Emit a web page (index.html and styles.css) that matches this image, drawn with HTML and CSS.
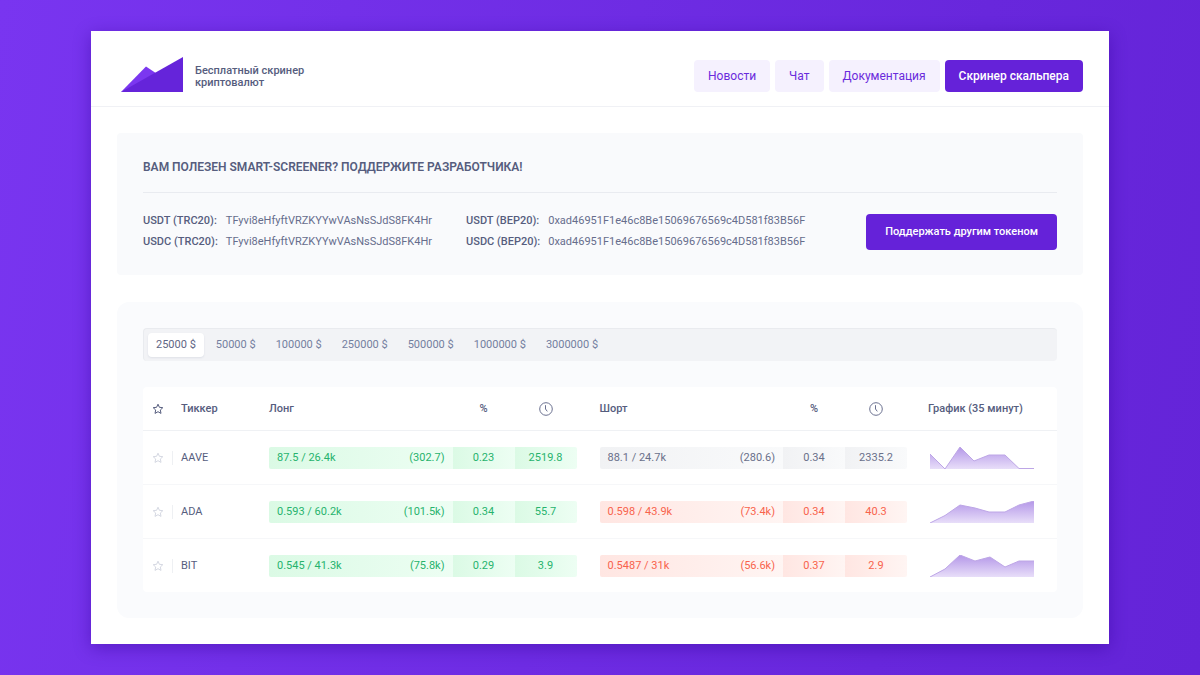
FILE: index.html
```html
<!DOCTYPE html>
<html lang="ru">
<head>
<meta charset="utf-8">
<meta name="viewport" content="width=device-width, initial-scale=1">
<title>Smart-Screener</title>
<link rel="stylesheet" href="styles.css">
</head>
<body>
<svg class="defs" aria-hidden="true">
  <defs>
    <linearGradient id="area" x1="0" y1="0" x2="0" y2="1">
      <stop offset="0" stop-color="#b497e8"/>
      <stop offset="1" stop-color="#e8def9"/>
    </linearGradient>
    <symbol id="star" viewBox="0 0 12 12">
      <path d="M6 1.2 7.4 4.3 10.8 4.7 8.3 7 9 10.4 6 8.7 3 10.4 3.7 7 1.2 4.7 4.6 4.3Z" fill="none" stroke="currentColor" stroke-linejoin="round"/>
    </symbol>
    <symbol id="clock" viewBox="0 0 14 14">
      <circle cx="7" cy="7" r="6.3" fill="none" stroke="currentColor"/>
      <path d="M6.5 3.2V7L8.3 9.4" fill="none" stroke="currentColor"/>
    </symbol>
  </defs>
</svg>
<div class="window">
  <header class="header">
    <a class="brand" href="#">
      <svg class="logo" viewBox="0 0 62 35" aria-hidden="true">
        <path d="M0 35 25 9.5 34 15.5 36 17 20 30Z" fill="#7b37f0"/>
        <path d="M0 35 62 0V35Z" fill="#6524da"/>
      </svg>
      <span class="tagline">Бесплатный скринер криптовалют</span>
    </a>
    <nav class="nav">
      <a class="nav-link" href="#">Новости</a>
      <a class="nav-link" href="#">Чат</a>
      <a class="nav-link" href="#">Документация</a>
      <a class="nav-link nav-link-primary" href="#">Скринер скальпера</a>
    </nav>
  </header>
  <main class="main">
    <section class="donate">
      <h1 class="donate-title">Вам полезен Smart-Screener? Поддержите разработчика!</h1>
      <div class="donate-body">
        <dl class="wallets wallets-first">
          <dt>USDT (TRC20):</dt><dd>TFyvi8eHfyftVRZKYYwVAsNsSJdS8FK4Hr</dd>
          <dt>USDC (TRC20):</dt><dd>TFyvi8eHfyftVRZKYYwVAsNsSJdS8FK4Hr</dd>
        </dl>
        <dl class="wallets">
          <dt>USDT (BEP20):</dt><dd>0xad46951F1e46c8Be15069676569c4D581f83B56F</dd>
          <dt>USDC (BEP20):</dt><dd>0xad46951F1e46c8Be15069676569c4D581f83B56F</dd>
        </dl>
        <button class="donate-button" type="button">Поддержать другим токеном</button>
      </div>
    </section>
    <section class="screener">
      <div class="tabs">
        <button class="tab tab-active" type="button">25000 $</button>
        <button class="tab" type="button">50000 $</button>
        <button class="tab" type="button">100000 $</button>
        <button class="tab" type="button">250000 $</button>
        <button class="tab" type="button">500000 $</button>
        <button class="tab" type="button">1000000 $</button>
        <button class="tab" type="button">3000000 $</button>
      </div>
      <table class="table">
        <colgroup>
          <col class="col-star"><col class="col-ticker">
          <col><col class="col-value"><col class="col-value">
          <col class="col-gap">
          <col><col class="col-value"><col class="col-value">
          <col class="col-chart">
        </colgroup>
        <thead>
          <tr>
            <th class="star"><svg class="icon-star" role="img" aria-label="Избранное"><use href="#star"/></svg></th>
            <th class="ticker">Тиккер</th>
            <th>Лонг</th>
            <th class="center">%</th>
            <th class="center"><svg class="icon-clock" role="img" aria-label="Время"><use href="#clock"/></svg></th>
            <th></th>
            <th>Шорт</th>
            <th class="center">%</th>
            <th class="center"><svg class="icon-clock" role="img" aria-label="Время"><use href="#clock"/></svg></th>
            <th class="chart-head">График (35 минут)</th>
          </tr>
        </thead>
        <tbody>
          <tr>
            <td class="star"><button class="star-button" type="button" aria-label="Добавить AAVE в избранное"><svg class="icon-star"><use href="#star"/></svg></button></td>
            <td class="ticker">AAVE</td>
            <td><div class="bar green first"><span>87.5 / 26.4k</span><span>(302.7)</span></div></td>
            <td><div class="bar green value">0.23</div></td>
            <td><div class="bar green value last">2519.8</div></td>
            <td></td>
            <td><div class="bar gray first"><span>88.1 / 24.7k</span><span>(280.6)</span></div></td>
            <td><div class="bar gray value">0.34</div></td>
            <td><div class="bar gray value last">2335.2</div></td>
            <td class="chart"><svg class="area" viewBox="0 0 104 22" aria-hidden="true"><path d="M0 22V7L15 22 30 0 44 14 59 8H75L89 21.5H104V22Z" fill="url(#area)"/><path d="M0 7 15 22 30 0 44 14 59 8H75L89 21.5H104" class="area-line"/></svg></td>
          </tr>
          <tr>
            <td class="star"><button class="star-button" type="button" aria-label="Добавить ADA в избранное"><svg class="icon-star"><use href="#star"/></svg></button></td>
            <td class="ticker">ADA</td>
            <td><div class="bar green first"><span>0.593 / 60.2k</span><span>(101.5k)</span></div></td>
            <td><div class="bar green value">0.34</div></td>
            <td><div class="bar green value last">55.7</div></td>
            <td></td>
            <td><div class="bar red first"><span>0.598 / 43.9k</span><span>(73.4k)</span></div></td>
            <td><div class="bar red value">0.34</div></td>
            <td><div class="bar red value last">40.3</div></td>
            <td class="chart"><svg class="area" viewBox="0 0 104 22" aria-hidden="true"><path d="M0 22 15 14.5 30 4 45 7 59 11H75L89 4 104 0V22Z" fill="url(#area)"/><path d="M0 22 15 14.5 30 4 45 7 59 11H75L89 4 104 0" class="area-line"/></svg></td>
          </tr>
          <tr>
            <td class="star"><button class="star-button" type="button" aria-label="Добавить BIT в избранное"><svg class="icon-star"><use href="#star"/></svg></button></td>
            <td class="ticker">BIT</td>
            <td><div class="bar green first"><span>0.545 / 41.3k</span><span>(75.8k)</span></div></td>
            <td><div class="bar green value">0.29</div></td>
            <td><div class="bar green value last">3.9</div></td>
            <td></td>
            <td><div class="bar red first"><span>0.5487 / 31k</span><span>(56.6k)</span></div></td>
            <td><div class="bar red value">0.37</div></td>
            <td><div class="bar red value last">2.9</div></td>
            <td class="chart"><svg class="area" viewBox="0 0 104 22" aria-hidden="true"><path d="M0 22 15 14 30 0 45 6 60 2 75 12 89 6H104V22Z" fill="url(#area)"/><path d="M0 22 15 14 30 0 45 6 60 2 75 12 89 6H104" class="area-line"/></svg></td>
          </tr>
        </tbody>
      </table>
    </section>
  </main>
</div>
</body>
</html>
```
FILE: styles.css
```css
* {
  box-sizing: border-box;
}

body {
  margin: 0;
  min-height: 100vh;
  padding: 31px 91px;
  background: linear-gradient(100deg, #7935f0 0%, #6827dc 75%, #6424d8 100%);
  color: #565d7e;
  font-family: Roboto, "Liberation Sans", sans-serif;
  font-size: 11px;
  line-height: 16px;
}

button {
  font: inherit;
  border: 0;
  cursor: pointer;
}

a {
  text-decoration: none;
}

.defs {
  position: absolute;
  width: 0;
  height: 0;
}

.window {
  background: #fff;
  box-shadow: 0 4px 16px rgba(50, 5, 150, 0.45);
}

.header {
  display: flex;
  align-items: center;
  justify-content: space-between;
  flex-wrap: wrap;
  padding: 26px 26px 14px 30px;
  border-bottom: 1px solid #f0f1f5;
}

.brand {
  display: flex;
  align-items: center;
  gap: 12px;
  color: #565d7e;
}

.logo {
  width: 62px;
  height: 35px;
}

.tagline {
  width: 130px;
  padding-top: 4px;
  font-weight: 500;
  line-height: 12px;
}

.nav {
  display: flex;
  flex-wrap: wrap;
  gap: 5px;
  padding-top: 3px;
}

.nav-link {
  padding: 8px 14px;
  border-radius: 4px;
  background: #f5f1fe;
  color: #6a2bdc;
  font-size: 12px;
}

.nav-link-primary {
  background: #6522d9;
  color: #fff;
  font-weight: 500;
}

.main {
  display: flex;
  flex-direction: column;
  gap: 27px;
  padding: 26px;
}

.donate {
  padding: 26px 26px 25px;
  border-radius: 4px;
  background: #f9fafc;
}

.donate-title {
  margin: 0;
  padding-bottom: 17px;
  border-bottom: 1px solid #e9ebf0;
  font-size: 12px;
  font-weight: 600;
  line-height: 16px;
  text-transform: uppercase;
}

.donate-body {
  display: flex;
  align-items: center;
  flex-wrap: wrap;
  padding-top: 20px;
}

.wallets {
  display: grid;
  grid-template-columns: auto auto;
  gap: 5px 8px;
  margin: 0;
}

.wallets-first {
  margin-right: 34px;
}

.wallets dt {
  font-weight: 500;
}

.wallets dd {
  margin: 0;
  color: #666d8c;
}

.donate-button {
  margin-left: auto;
  padding: 10px 19px;
  border-radius: 4px;
  background: #6522d9;
  color: #fff;
  font-weight: 500;
}

.screener {
  padding: 26px;
  border-radius: 12px;
  background: #fafbfd;
}

.tabs {
  display: flex;
  flex-wrap: wrap;
  gap: 4px;
  margin-bottom: 26px;
  padding: 4px;
  border: 1px solid #e9ebef;
  border-width: 1px 0 0 1px;
  border-radius: 4px;
  background: #f2f3f6;
}

.tab {
  padding: 4px 8px;
  border-radius: 4px;
  background: none;
  color: #7480a0;
}

.tab-active {
  background: #fff;
  box-shadow: 0 1px 2px rgba(80, 90, 130, 0.12);
  color: #5f6685;
}

.table {
  width: 100%;
  table-layout: fixed;
  border-collapse: separate;
  border-spacing: 0;
  border-radius: 4px;
  background: #fff;
}

.col-star {
  width: 30px;
}

.col-ticker {
  width: 96px;
}

.col-value {
  width: 62px;
}

.col-gap {
  width: 23px;
}

.col-chart {
  width: 150px;
}

.table th,
.table td {
  padding: 0;
  border-bottom: 1px solid #f6f7f9;
  vertical-align: middle;
}

.table th {
  height: 44px;
  border-bottom-color: #eff1f4;
  font-weight: 500;
  text-align: left;
}

.table td {
  height: 54px;
}

.table tbody tr:last-child td {
  height: 53px;
  border-bottom: 0;
}

.table .star {
  padding-left: 9px;
}

.table .ticker {
  padding-left: 8px;
}

.table .center {
  text-align: center;
}

.table .chart-head {
  padding-left: 21px;
}

.table .chart {
  padding-left: 23px;
}

.icon-star,
.icon-clock,
.area {
  display: block;
}

.icon-star {
  width: 12px;
  height: 12px;
}

.icon-clock {
  width: 14px;
  height: 14px;
  margin: 0 auto;
  color: #6b7190;
}

.star-button {
  display: flex;
  align-items: center;
  width: 100%;
  height: 14px;
  padding: 0;
  border-right: 1px solid #eef0f3;
  background: none;
  color: #d5d8e2;
}

.area {
  width: 104px;
  height: 22px;
}

.area-line {
  fill: none;
  stroke: #bda6e6;
}

.bar {
  display: flex;
  justify-content: space-between;
  height: 22px;
  padding: 0 8px;
  line-height: 22px;
}

.first {
  border-radius: 2px 0 0 2px;
}

.last {
  border-radius: 0 2px 2px 0;
}

.value {
  justify-content: center;
}

.green {
  background: linear-gradient(90deg, #dbfae5, #edfef3);
  color: #27b36d;
}

.gray {
  background: linear-gradient(90deg, #f1f2f4, #f9fafb);
  color: #6a708a;
}

.red {
  background: linear-gradient(90deg, #ffe6e2, #fff5f3);
  color: #f8634c;
}
```
